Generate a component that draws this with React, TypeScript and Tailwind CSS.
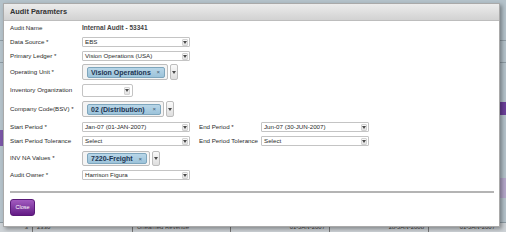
import React from "react";

const font = { fontFamily: '"Liberation Sans", Arial, sans-serif' };

function Arrow() {
  return (
    <svg width="4" height="3" viewBox="0 0 4 3">
      <path d="M0 0 L4 0 L2 3 Z" fill="#4a4a4a" />
    </svg>
  );
}

function Select({ value, w }: { value: string; w: string }) {
  return (
    <div
      className={`${w} h-[10px] flex items-center justify-between rounded-[1px] border border-[#c4c4c4] bg-white pl-[2px] pr-[1px]`}
    >
      <span className="text-[6.2px] leading-none text-[#2a2a2a] whitespace-nowrap">{value}</span>
      <span className="flex h-[7px] w-[6px] items-center justify-center rounded-[1px] border border-[#d2d2d2] bg-gradient-to-b from-[#fafafa] to-[#e2e2e2]">
        <Arrow />
      </span>
    </div>
  );
}

function TagBox({ tag, w }: { tag: string; w: string }) {
  return (
    <div className="flex h-full items-stretch gap-[2px]">
      <div
        className={`${w} flex items-center rounded-[2px] border border-[#bdbdbd] bg-[#f4f4f4] pl-[4px] pr-[2px]`}
      >
        <div className="flex h-[11px] flex-1 items-center justify-between rounded-[2px] border border-[#7ea6bd] bg-gradient-to-b from-[#b8d6e8] to-[#9cc3da] pl-[3px] pr-[4px]">
          <span className="text-[7px] font-bold leading-none text-[#1d3552] whitespace-nowrap">{tag}</span>
          <span className="text-[6px] leading-none text-[#3d5a72]">×</span>
        </div>
      </div>
      <div className="flex w-[8px] items-center justify-center rounded-[2px] border border-[#bdbdbd] bg-gradient-to-b from-[#fafafa] to-[#dedede]">
        <Arrow />
      </div>
    </div>
  );
}

function Label({ children, w = "w-[72px]" }: { children: React.ReactNode; w?: string }) {
  return (
    <div className={`${w} shrink-0 text-[6.2px] leading-none text-[#2b2b2b] whitespace-nowrap`}>{children}</div>
  );
}

export default function App() {
  return (
    <div className="relative h-[232px] w-[506px] overflow-hidden bg-[#b4c2ca]" style={font}>
      {/* page behind the dialog */}
      <div className="absolute left-0 top-[40px] h-[1px] w-full bg-[#8d9ba3]" />
      <div className="absolute left-0 top-[62px] h-[1px] w-full bg-[#8d9ba3]" />
      <div className="absolute right-0 top-[102px] h-[13px] w-[8px] bg-[#6b3f9a]" />
      <div className="absolute right-0 top-[178px] h-[20px] w-[8px] bg-[#b3a6c9]" />
      <div className="absolute left-0 top-[130px] h-[16px] w-[4px] bg-[#7a56a6]" />
      <div className="absolute left-0 top-[222px] flex h-[10px] w-full items-center border-t border-[#8d9ba3] bg-[#cdd2d6] text-[6px] text-[#444]">
        <div className="w-[33px] border-r border-[#777] pr-[4px] text-right">3</div>
        <div className="w-[100px] border-r border-[#777] pl-[4px]">2330</div>
        <div className="w-[98px] border-r border-[#777] pl-[4px]">Unearned Revenue</div>
        <div className="w-[99px] border-r border-[#777] pr-[4px] text-right">01-JAN-2007</div>
        <div className="w-[99px] border-r border-[#777] pr-[4px] text-right">28-JAN-2008</div>
        <div className="w-[70px] pr-[4px] text-right">01-JAN-2007</div>
      </div>

      {/* dialog */}
      <div className="absolute left-[3px] top-[3px] flex h-[224px] w-[497px] flex-col border border-[#a9a9a9] bg-white shadow-[2px_2px_4px_rgba(0,0,0,0.35)]">
        <div className="flex h-[17px] shrink-0 items-center border-b border-[#bdbdbd] bg-gradient-to-b from-[#ececec] to-[#d2d2d2] px-[6px]">
          <span className="text-[7.4px] font-bold text-[#333]">Audit Paramters</span>
        </div>

        <div className="flex flex-col px-[6px]">
          <div className="mt-[2px] flex h-[10px] items-center">
            <Label>Audit Name</Label>
            <span className="text-[6.5px] font-bold leading-none text-[#444]">Internal Audit - 53341</span>
          </div>
          <div className="mt-[4px] flex h-[10px] items-center">
            <Label>Data Source *</Label>
            <Select value="EBS" w="w-[108px]" />
          </div>
          <div className="mt-[4px] flex h-[10px] items-center">
            <Label>Primary Ledger *</Label>
            <Select value="Vision Operations (USA)" w="w-[108px]" />
          </div>
          <div className="mt-[3px] flex h-[16px] items-center">
            <Label>Operating Unit *</Label>
            <TagBox tag="Vision Operations" w="w-[86px]" />
          </div>
          <div className="mt-[4px] flex h-[13px] items-center">
            <Label>Inventory Organization</Label>
            <div className="flex h-full w-[51px] items-center justify-end rounded-[2px] border border-[#c4c4c4] bg-white pr-[2px]">
              <span className="flex h-[8px] w-[6px] items-center justify-center rounded-[1px] border border-[#d2d2d2] bg-gradient-to-b from-[#fafafa] to-[#e2e2e2]">
                <Arrow />
              </span>
            </div>
          </div>
          <div className="mt-[4px] flex h-[16px] items-center">
            <Label>Company Code(BSV) *</Label>
            <TagBox tag="02 (Distribution)" w="w-[82px]" />
          </div>
          <div className="mt-[5px] flex h-[10px] items-center">
            <Label>Start Period *</Label>
            <Select value="Jan-07 (01-JAN-2007)" w="w-[108px]" />
            <div className="w-[9px]" />
            <Label w="w-[62px]">End Period *</Label>
            <Select value="Jun-07 (30-JUN-2007)" w="w-[108px]" />
          </div>
          <div className="mt-[4px] flex h-[10px] items-center">
            <Label>Start Period Tolerance</Label>
            <Select value="Select" w="w-[108px]" />
            <div className="w-[9px]" />
            <Label w="w-[62px]">End Period Tolerance</Label>
            <Select value="Select" w="w-[108px]" />
          </div>
          <div className="mt-[5px] flex h-[15px] items-center">
            <Label>INV NA Values *</Label>
            <TagBox tag="7220-Freight" w="w-[68px]" />
          </div>
          <div className="mt-[4px] flex h-[10px] items-center">
            <Label>Audit Owner *</Label>
            <Select value="Harrison Figura" w="w-[108px]" />
          </div>
          <div className="mt-[11px] h-[2px] w-[484px] bg-[#b4b4b4]" />
          <div className="mt-[6px]">
            <button className="flex h-[17px] w-[25px] items-center justify-center rounded-[3px] border border-[#5a1a78] bg-gradient-to-b from-[#a35bc0] to-[#641a86] text-[5.5px] text-white">
              Close
            </button>
          </div>
        </div>
      </div>
    </div>
  );
}
